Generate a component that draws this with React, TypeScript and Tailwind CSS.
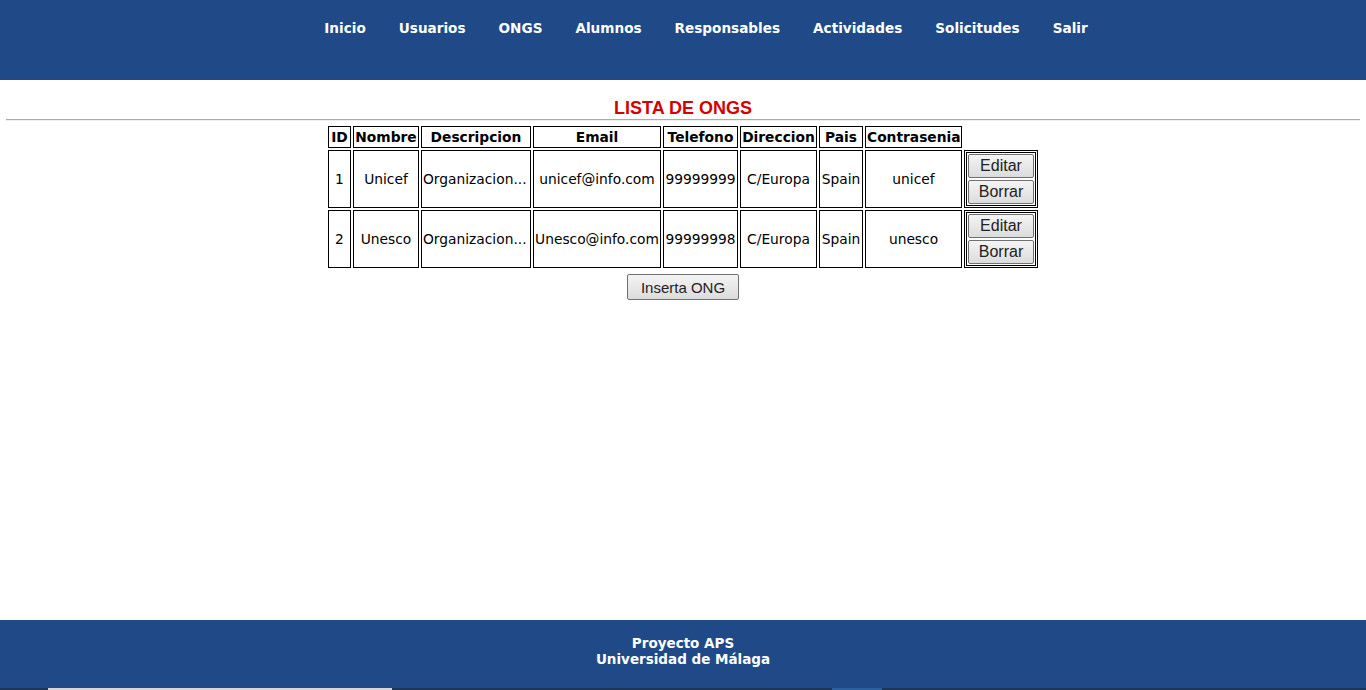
const links = ['Inicio', 'Usuarios', 'ONGS', 'Alumnos', 'Responsables', 'Actividades', 'Solicitudes', 'Salir']

const cols = [
  { label: 'ID', w: 'w-[23px]' },
  { label: 'Nombre', w: 'w-[66px]' },
  { label: 'Descripcion', w: 'w-[110px]' },
  { label: 'Email', w: 'w-[128px]' },
  { label: 'Telefono', w: 'w-[75px]' },
  { label: 'Direccion', w: 'w-[77px]' },
  { label: 'Pais', w: 'w-[44px]' },
  { label: 'Contrasenia', w: 'w-[97px]' },
]

const ongs = [
  { id: 1, nombre: 'Unicef', email: 'unicef@info.com', tel: '99999999', dir: 'C/Europa', pais: 'Spain', pass: 'unicef' },
  { id: 2, nombre: 'Unesco', email: 'Unesco@info.com', tel: '99999998', dir: 'C/Europa', pais: 'Spain', pass: 'unesco' },
]

const btn =
  "block border border-[#707070] rounded-[2px] bg-gradient-to-b from-[#f4f4f4] to-[#dcdcdc] text-[#222] font-['Liberation_Sans',Arial,sans-serif] leading-none"

function Cell({ children }: { children: React.ReactNode }) {
  return <td className="border border-black p-px text-center align-middle">{children}</td>
}

export default function App() {
  return (
    <div className="flex h-[690px] flex-col bg-white font-['DejaVu_Sans',Verdana,sans-serif] text-black">
      <header className="h-[80px] shrink-0 bg-[#204a87] pt-[20px]">
        <nav className="flex justify-center gap-[33px] pl-[46px] text-[13.6px] font-bold leading-[16px] text-white">
          {links.map((l) => (
            <a key={l} href="#">
              {l}
            </a>
          ))}
        </nav>
      </header>

      <main className="flex-1 pt-[18px]">
        <h1 className="text-center font-['Liberation_Sans',Arial,sans-serif] text-[18px] font-bold leading-[21px] text-[#d40000]">
          LISTA DE ONGS
        </h1>
        <hr className="mx-[6px] h-0 border-t border-b border-t-[#aaaaaa] border-b-[#eeeeee]" />

        <table className="mx-auto mt-[3px] w-[714px] table-fixed border-separate border-spacing-[2px] text-[13.8px] leading-[18px]">
          <thead>
            <tr>
              {cols.map((c) => (
                <th key={c.label} className={`${c.w} border border-black p-px text-center font-bold`}>
                  {c.label}
                </th>
              ))}
            </tr>
          </thead>
          <tbody>
            {ongs.map((o) => (
              <tr key={o.id}>
                <Cell>{o.id}</Cell>
                <Cell>{o.nombre}</Cell>
                <td className="border border-black p-px text-left align-middle">
                  <div className="truncate">Organizacion...</div>
                </td>
                <Cell>{o.email}</Cell>
                <Cell>{o.tel}</Cell>
                <Cell>{o.dir}</Cell>
                <Cell>{o.pais}</Cell>
                <Cell>{o.pass}</Cell>
                <td className="border border-black p-px align-middle">
                  <div className="flex flex-col gap-[2px] border border-black p-px">
                    <button className={`${btn} h-[24px] w-full text-[16px]`}>Editar</button>
                    <button className={`${btn} h-[24px] w-full text-[16px]`}>Borrar</button>
                  </div>
                </td>
              </tr>
            ))}
          </tbody>
        </table>

        <div className="mt-[4px] flex justify-center">
          <button className={`${btn} h-[26px] w-[112px] text-[15px]`}>Inserta ONG</button>
        </div>
      </main>

      <footer className="h-[68px] shrink-0 bg-[#204a87] pt-[15px] text-center text-[13.5px] font-bold leading-[16px] text-white">
        <p>Proyecto APS</p>
        <p>Universidad de Málaga</p>
      </footer>
      <div className="flex h-[2px] shrink-0 bg-[#1d3656]">
        <div className="ml-[48px] w-[344px] bg-[#d6d6d6]" />
        <div className="ml-[440px] w-[50px] bg-[#2b5f9e]" />
      </div>
    </div>
  )
}
